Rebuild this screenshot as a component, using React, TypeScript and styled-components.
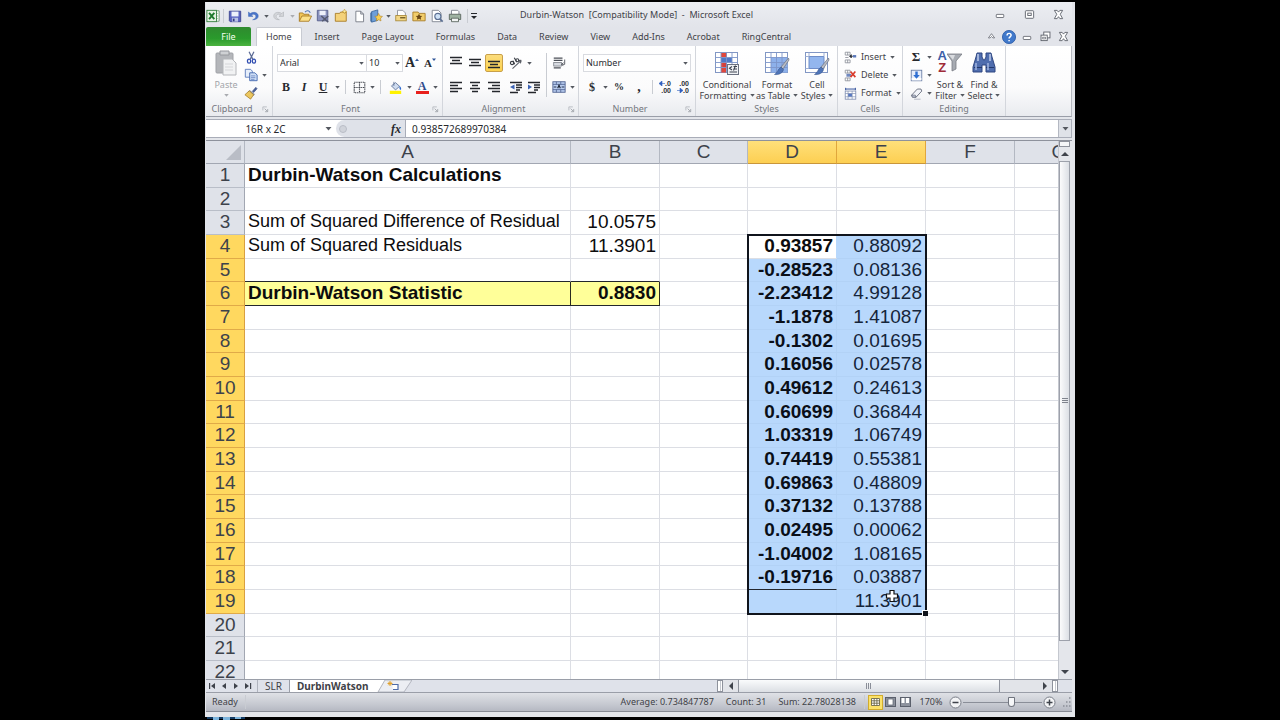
import React from "react";
import styled, { createGlobalStyle, css } from "styled-components";

const UI = `"Noto Sans", "Open Sans", sans-serif`;
const SHEET = `"Liberation Sans", Arial, sans-serif`;

const Global = createGlobalStyle`
  * { box-sizing: border-box; }
  html, body { margin: 0; background: #000; }
  body { font-family: ${UI}; font-size: 9px; line-height: 12px; color: #3f4247; }
  button, input, select { font: inherit; color: inherit; margin: 0; padding: 0; border: 0; background: none; }
  a { color: inherit; text-decoration: none; }
  svg { display: block; flex: none; }
`;

/* ---------- frame ---------- */

const Page = styled.div`
  display: flex;
  flex-direction: column;
  height: 100vh;
  padding: 2px 205px 0;
`;

const Window = styled.main`
  flex: 1;
  min-height: 0;
  display: flex;
  flex-direction: column;
  padding: 0 3px 5px 1px;
  background: #e3e5ea;
`;

const Taskbar = styled.div`
  height: 3px;
  background: #000;
`;

const TitleBar = styled.header`
  display: flex;
  align-items: center;
  height: 25px;
  background: linear-gradient(#eceef2, #e2e4ea);
`;

const QuickAccess = styled.div`
  flex: 1 1 0;
  display: flex;
  align-items: center;
  padding-top: 3px;
`;

const Title = styled.h1`
  margin: 0;
  font-size: 9px;
  font-weight: 400;
  line-height: 14px;
  white-space: pre;
  color: #3f4248;
`;

const Controls = styled.div<{ $gap: number; $end?: number }>`
  flex: 1 1 0;
  display: flex;
  align-items: center;
  justify-content: flex-end;
  gap: ${(p) => p.$gap}px;
  padding-right: ${(p) => p.$end ?? 0}px;
`;

const Slot = styled.button<{ $w?: number; $on?: boolean }>`
  display: flex;
  align-items: center;
  justify-content: center;
  width: ${(p) => p.$w ?? 18}px;
  height: 18px;
  flex: none;
  ${(p) =>
    p.$on &&
    css`
      background: linear-gradient(#fbdc7c, #fcd24f);
      border: 1px solid #c9a04a;
      border-radius: 2px;
    `}
`;

const Divider = styled.span<{ $w?: number; $h?: number }>`
  display: flex;
  justify-content: center;
  flex: none;
  width: ${(p) => p.$w ?? 7}px;
  &::before {
    content: "";
    width: 1px;
    height: ${(p) => p.$h ?? 14}px;
    background: #c9ccd2;
  }
`;

/* ---------- ribbon ---------- */

const TabRow = styled.nav`
  display: flex;
  align-items: stretch;
  height: 19px;
  background: #e2e4ea;
`;

const FileTab = styled.button`
  width: 45px;
  margin-right: 5px;
  background: linear-gradient(#2f8a2f, #2a9a2c 60%, #4bb33f);
  border-radius: 2px 2px 0 0;
  color: #f4fff0;
`;

const Tab = styled.a<{ $on?: boolean }>`
  display: flex;
  align-items: center;
  padding: 0 11px;
  white-space: nowrap;
  ${(p) => p.$on && css`
    padding: 0 9px;
    margin-right: 2px;
    background: #fff;
    border: 1px solid #c8cbd2;
    border-bottom: 0;
    border-radius: 2px 2px 0 0;
  `}
`;

const Ribbon = styled.section`
  display: flex;
  height: 71px;
  background: linear-gradient(#ffffff, #fbfbfc 60%, #e9ebef);
  border-bottom: 1px solid #9a9ea8;
  border-right: 1px solid #b5b8c0;
`;

const GroupBox = styled.div<{ $w: number }>`
  display: flex;
  flex-direction: column;
  flex: none;
  width: ${(p) => p.$w}px;
  border-right: 1px solid #d3d6dc;
`;

const GroupBody = styled.div<{ $pad?: number }>`
  display: flex;
  height: 56px;
  padding-left: ${(p) => p.$pad ?? 4}px;
`;

const GroupFoot = styled.div`
  display: flex;
  align-items: center;
  height: 14px;
  color: #74777e;
`;

const GroupName = styled.span`
  flex: 1;
  text-align: center;
`;

const Rows = styled.div<{ $top?: number; $w?: number }>`
  display: flex;
  flex-direction: column;
  flex: none;
  padding-top: ${(p) => p.$top ?? 5}px;
  ${(p) => p.$w && css`width: ${p.$w}px;`}
`;

const Row = styled.div<{ $h?: number; $gap?: number }>`
  display: flex;
  align-items: center;
  height: ${(p) => p.$h ?? 24}px;
`;

const Gap = styled.span`
  width: 4px;
  flex: none;
`;

const Field = styled.label<{ $w: number }>`
  display: flex;
  align-items: center;
  width: ${(p) => p.$w}px;
  height: 18px;
  padding: 0 2px;
  background: #fff;
  border: 1px solid #d9dbe0;
  & + & { border-left: 0; }
  select {
    flex: 1;
    min-width: 0;
    appearance: none;
    outline: 0;
    color: #2c2e33;
  }
`;

const BigButton = styled.button<{ $w: number; $dim?: boolean }>`
  display: flex;
  flex-direction: column;
  align-items: center;
  flex: none;
  width: ${(p) => p.$w}px;
  padding-top: 4px;
  line-height: 11px;
  white-space: nowrap;
  color: ${(p) => (p.$dim ? "#a3a5aa" : "inherit")};
  svg.big { margin-bottom: 3px; }
`;

const Line = styled.span`
  display: flex;
  align-items: center;
  gap: 3px;
  height: 11px;
`;

const TextButton = styled.button`
  display: flex;
  align-items: center;
  height: 18px;
  gap: 4px;
`;

const IconCell = styled.span`
  display: flex;
  justify-content: center;
  width: 14px;
`;

/* ---------- formula bar ---------- */

const FormulaBar = styled.div`
  display: flex;
  align-items: stretch;
  height: 19px;
  margin: 2px 0;
  background: #fff;
  border: 1px solid #a9adb8;
  border-left: 0;
  font-size: 10px;
`;

const NameBox = styled.div`
  display: flex;
  align-items: center;
  width: 130px;
  padding-right: 4px;
  input { flex: 1; min-width: 0; text-align: center; outline: 0; color: #26282c; }
`;

const FxArea = styled.div`
  display: flex;
  align-items: center;
  justify-content: space-between;
  width: 70px;
  padding: 0 4px 0 3px;
  background: #dfe2e9;
  border-right: 1px solid #a9adb8;
  border-radius: 9px 0 0 9px;
`;

const FormulaInput = styled.input`
  flex: 1;
  min-width: 0;
  padding-left: 6px !important;
  outline: 0;
  color: #26282c !important;
`;

const DropButton = styled.button`
  display: flex;
  align-items: center;
  justify-content: center;
  width: 13px;
  background: #dfe2e8;
  border-left: 1px solid #b4b8c2;
`;

/* ---------- worksheet ---------- */

const SheetArea = styled.section`
  flex: 1;
  min-height: 0;
  display: flex;
  border-top: 1px solid #8e929c;
`;

const SheetView = styled.div`
  flex: 1;
  min-width: 0;
  overflow: hidden;
  position: relative;
  background: #fff;
`;

const Table = styled.table`
  table-layout: fixed;
  width: 898px;
  border-collapse: separate;
  border-spacing: 0;
  font-family: ${SHEET};
  font-size: 19px;
  line-height: 21px;
  color: #0c0c0e;
  th, td { padding: 0; height: 24px; vertical-align: top; }
  tbody tr:nth-child(3n + 2) > * { height: 23px; }
`;

const ColHead = styled.th<{ $on?: boolean }>`
  && { height: 23px; }
  font-weight: 400;
  color: #3d424b;
  background: ${(p) => (p.$on ? "linear-gradient(#ffe07a, #fdcf52)" : "#dfe2e9")};
  border-right: 1px solid ${(p) => (p.$on ? "#e0a63c" : "#b3b8c2")};
  border-bottom: 1px solid ${(p) => (p.$on ? "#c9963a" : "#a2a7b2")};
`;

const RowHead = styled.th<{ $on?: boolean }>`
  font-weight: 400;
  color: #3d424b;
  background: ${(p) => (p.$on ? "#ffd85f" : "#dfe2e9")};
  border-right: 1px solid ${(p) => (p.$on ? "#d9a040" : "#a2a7b2")};
  border-bottom: 1px solid ${(p) => (p.$on ? "#e0aa48" : "#b9bec8")};
`;

type CellLook = { $num?: boolean; $bold?: boolean; $fill?: "sel" | "active" | "yellow"; $under?: boolean; $side?: boolean };

const Cell = styled.td<CellLook>`
  && { padding: 0 3px; }
  overflow: hidden;
  white-space: nowrap;
  font-size: ${(p) => (p.$num || p.$bold ? 19 : 18)}px;
  text-align: ${(p) => (p.$num ? "right" : "left")};
  font-weight: ${(p) => (p.$bold ? 700 : 400)};
  border-right: 1px solid #dcdee4;
  border-bottom: 1px solid #dcdee4;
  ${(p) => p.$fill === "sel" && css`background: #b8d8fc; border-color: #b2d2f6; color: #15253a;`}
  ${(p) => p.$fill === "sel" && p.$bold && css`color: #0a0f18;`}
  ${(p) => p.$fill === "active" && css`background: #fff; border-right-color: #b8d8fc;`}
  ${(p) => p.$fill === "yellow" && css`background: #ffff99;`}
  ${(p) => p.$side && css`border-right-color: #2a2a20;`}
  ${(p) => p.$under && css`border-bottom-color: #23262c;`}
`;

const Selection = styled.div`
  position: absolute;
  left: 541px;
  top: 93px;
  width: 180px;
  height: 381px;
  border: 2px solid #10141c;
  pointer-events: none;
  &::after {
    content: "";
    position: absolute;
    right: -3px;
    bottom: -3px;
    width: 5px;
    height: 5px;
    background: #10141c;
    border: solid #fff;
    border-width: 1px 0 0 1px;
  }
`;

const Pointer = styled.div`
  position: absolute;
  left: 679px;
  top: 448px;
`;

const VScroll = styled.div`
  display: flex;
  flex-direction: column;
  width: 14px;
  background: #e4e6eb;
  border-left: 1px solid #c5c8cf;
`;

const VThumb = styled.div`
  flex: 20;
  display: flex;
  align-items: center;
  justify-content: center;
  width: 11px;
  background: linear-gradient(90deg, #fbfbfc, #dcdfe5);
  border: 1px solid #9da1ab;
`;

const VRest = styled.div`
  flex: 1;
`;

const VArrow = styled.button`
  display: flex;
  align-items: center;
  justify-content: center;
  width: 12px;
  height: 14px;
`;

const SplitBox = styled.div`
  width: 11px;
  height: 6px;
  background: #f5f6f8;
  border: 1px solid #8e929c;
`;

/* ---------- sheet tabs & status ---------- */

const TabStrip = styled.div`
  display: flex;
  align-items: stretch;
  height: 14px;
  background: #dfe2ea;
  border-top: 1px solid #9a9ea8;
  border-bottom: 1px solid #9a9ea8;
`;

const SheetTabs = styled.div`
  flex: 1;
  display: flex;
  align-items: stretch;
  min-width: 0;
`;

const SheetNav = styled.div`
  display: flex;
  width: 51px;
`;

const NavButton = styled.button`
  display: flex;
  align-items: center;
  justify-content: center;
  width: 12px;
`;

const SheetTab = styled.button<{ $on?: boolean }>`
  padding: 0 7px;
  font-size: 10px;
  line-height: 12px;
  font-weight: ${(p) => (p.$on ? 700 : 400)};
  background: ${(p) => (p.$on ? "#fff" : "#dfe2ea")};
  border-left: ${(p) => (p.$on ? 0 : 1)}px solid #b0b4be;
  border-right: ${(p) => (p.$on ? 0 : 1)}px solid #9a9ea8;
  white-space: nowrap;
`;

const NewTab = styled.button`
  display: flex;
`;

const HScroll = styled.div`
  display: flex;
  align-items: stretch;
  flex: 0 0 341px;
  background: #e2e4e9;
`;

const HArrow = styled(NavButton)`
  width: 15px;
`;

const HThumb = styled.div`
  flex: 262;
  display: flex;
  align-items: center;
  justify-content: center;
  background: linear-gradient(#fafbfc, #dcdfe4);
  border: solid #8e929c;
  border-width: 0 1px;
`;

const HRest = styled.div`
  flex: 37;
`;

const HSplit = styled.div`
  width: 6px;
  display: flex;
  justify-content: center;
  background: #fff;
  border: 1px solid #8e929c;
  &::before { content: ""; width: 1px; background: #c5c8cf; }
`;

const Corner = styled.div`
  width: 14px;
`;

const StatusBar = styled.footer`
  display: flex;
  align-items: center;
  height: 19px;
  padding-left: 6px;
  background: linear-gradient(#dfe1e6, #c3c6ce 70%, #b5b8c2);
  border-bottom: 1px solid #868a94;
`;

const Ready = styled.span`
  width: 30px;
`;

const Stats = styled.div`
  flex: 1;
  display: flex;
  justify-content: flex-end;
  gap: 12px;
  padding-right: 5px;
  white-space: nowrap;
`;

const View = styled.button<{ $on?: boolean }>`
  display: flex;
  align-items: center;
  justify-content: center;
  width: 15px;
  height: 15px;
  ${(p) => p.$on && css`background: #fbe26a; border: 1px solid #d2ac2c;`}
`;

const Zoom = styled.button`
  width: 36px;
  text-align: center;
`;

const Range = styled.input`
  appearance: none;
  width: 79px;
  height: 12px;
  margin: 0 1px;
  background: linear-gradient(#8a8e98, #8a8e98) center / 100% 1px no-repeat;
  &::-webkit-slider-thumb {
    appearance: none;
    width: 7px;
    height: 10px;
    background: #f6f7f9;
    border: 1px solid #70747e;
    border-radius: 1px 1px 4px 4px;
  }
`;

/* ---------- icons ---------- */

const Caret = ({ w = 8, dim }: { w?: number; dim?: boolean }) => (
  <Slot $w={w} aria-label="More options">
    <Tri dim={dim} />
  </Slot>
);

const Tri = ({ dim, big }: { dim?: boolean; big?: boolean }) => (
  <svg width={big ? 7 : 5} height={big ? 4 : 3} viewBox="0 0 6 4">
    <path d="M0 0h6L3 3.6z" fill={dim ? "#a9abb0" : "#555960"} />
  </svg>
);

const art: Record<string, React.ReactNode> = {
  excel: (
    <>
      <path d="M7 2h8v12H7z" fill="#fff" stroke="#6d9a6f" />
      <path d="M9 5h5M9 8h5M9 11h5" stroke="#9cc29c" />
      <rect x="1" y="1.500" width="11" height="13" fill="#e6f3e4" stroke="#2f7d3a" />
      <path d="M3.500 4.500l6 7M9.500 4.500l-6 7" stroke="#1f7a2d" strokeWidth="2.200" />
    </>
  ),
  save: (
    <>
      <path d="M1.500 2.500h13v12h-12l-1-1z" fill="#5a63c0" stroke="#3c448f" />
      <rect x="4" y="3" width="8" height="5.500" fill="#eef1fb" />
      <rect x="4.500" y="10" width="7" height="4.500" fill="#b9c1e6" />
      <rect x="5.500" y="11" width="2" height="3" fill="#353c80" />
    </>
  ),
  undo: <path d="M2 2.500v6h6L5.800 6.500c3-2 6-.5 6 2 0 2-1.500 3.500-4.300 4.500 5 .2 7.500-2 7.500-5C15 3.500 9 1.500 4.200 4.800z" fill="#4a76c9" stroke="#3560b4" strokeWidth=".6" />,
  redo: <path d="M14 2.500v6H8l2.200-2c-3-2-6-.5-6 2 0 2 1.500 3.500 4.300 4.500C3.500 13.200 1 11 1 8c0-4.500 6-6.500 10.800-3.200z" fill="#d4d6da" stroke="#aeb1b7" strokeWidth=".8" />,
  open: (
    <>
      <path d="M1.500 14V4.500h4l1 1.500h6v3" fill="#f1c65a" stroke="#a77a24" />
      <path d="M1.500 14l3-6h11l-3 6z" fill="#fbe08a" stroke="#a77a24" />
      <path d="M8 3.500c2-2.500 5-2 6 1" fill="none" stroke="#4f74b8" strokeWidth="1.200" />
    </>
  ),
  savex: (
    <>
      <path d="M1.500 1.500h12v12h-12z" fill="#8a92bd" stroke="#555d8c" />
      <rect x="4" y="2" width="7" height="5" fill="#eef1fb" />
      <path d="M6 8l8 7M14 8l-7 6" stroke="#565b70" strokeWidth="1.800" />
    </>
  ),
  folder: (
    <>
      <path d="M1.500 14v-9h5l1-1.500h6.500V14z" fill="#f4d27a" stroke="#a77a24" />
      <path d="M12 0l.8 2 2 .7-2 .8-.8 2-.8-2-2-.8 2-.7z" fill="#ffef9c" stroke="#b88a25" strokeWidth=".5" />
    </>
  ),
  page: <path d="M3.500 1.500h6l3.500 3.500v9.500H3.500zM9.500 1.500V5H13" fill="#fff" stroke="#6a6f7b" />,
  book: (
    <>
      <path d="M3 3l7-2v12l-7 2z" fill="#6f9fd8" stroke="#3c689f" />
      <path d="M1.500 4.500L3 3v12l-1.500-1z" fill="#3c689f" />
      <path d="M11 5l1.400 3 3 .5-2.200 2 .5 3.200-2.700-1.500-2.700 1.500.5-3.200-2.200-2 3-.5z" fill="#fbcf4f" stroke="#a77a24" strokeWidth=".6" />
    </>
  ),
  mail: (
    <>
      <path d="M4 1.500h6l3 3V11H4z" fill="#fff" stroke="#8b8f99" />
      <rect x="2" y="7.500" width="12" height="6" fill="#f3d684" stroke="#a88a3c" />
      <path d="M7 10h6" stroke="#6d5a24" strokeWidth="1.500" />
    </>
  ),
  star: (
    <>
      <path d="M1 13.500v-10h6l1 1.500h7v8.500z" fill="#f1cd6c" stroke="#a77a24" />
      <path d="M8 5.500l1.200 2.300 2.500.3-1.800 1.700.5 2.500L8 11.100l-2.400 1.200.5-2.500-1.800-1.700 2.500-.3z" fill="#6a4714" />
    </>
  ),
  preview: (
    <>
      <path d="M2.500 1.500h7l3 3v10h-10z" fill="#fff" stroke="#7b808c" />
      <circle cx="9" cy="8.500" r="3.500" fill="#cfe2f6" stroke="#5b6f92" strokeWidth="1.300" />
      <path d="M11.500 11.500l3 3" stroke="#5b6f92" strokeWidth="2" />
    </>
  ),
  print: (
    <>
      <path d="M4 6V1.500h7l1.500 1.500V6" fill="#fff" stroke="#7b808c" />
      <path d="M1.500 6h13v6h-13z" fill="#9fb3a2" stroke="#58645c" />
      <path d="M4 10.500h8v4H4z" fill="#f2f4f3" stroke="#58645c" />
    </>
  ),
  cut: (
    <>
      <path d="M5 1l4.500 9M11 1L6.500 10" stroke="#5b6a94" strokeWidth="1.500" fill="none" />
      <ellipse cx="5" cy="12.500" rx="2" ry="2.400" fill="none" stroke="#2f4cb0" strokeWidth="1.600" />
      <ellipse cx="11" cy="12.500" rx="2" ry="2.400" fill="none" stroke="#2f4cb0" strokeWidth="1.600" />
    </>
  ),
  copy: (
    <>
      <path d="M1.500 1.500h6l2 2v7h-8z" fill="#e7effb" stroke="#5777b8" />
      <path d="M6.500 5.500h6l2.500 2.500v6.500H6.500z" fill="#cfdff6" stroke="#3d62ad" />
      <path d="M8 9h5M8 11h5M8 13h4" stroke="#5777b8" strokeWidth=".8" />
    </>
  ),
  brush: (
    <>
      <path d="M9.500 6l4-4.500 1.500 1.500-4 4.500z" fill="#49609a" stroke="#33477c" strokeWidth=".6" />
      <path d="M6.500 4.500l6 5-2 2-6-5z" fill="#8c93a4" />
      <path d="M1 10l5-4.500 5 4.500-3.500 5z" fill="#ecc75f" stroke="#9c7420" strokeWidth=".8" />
    </>
  ),
  borders: (
    <path d="M1.500 1.500h13v13h-13zM8 1.500v13M1.500 8h13" fill="none" stroke="#3b3f47" strokeDasharray="1.600 1" strokeWidth="1.400" />
  ),
  fill: (
    <>
      <path d="M3 6l5-4 5 4.500-5 4.500z" fill="#cfdcf0" stroke="#5a6d92" />
      <path d="M6 1v5" stroke="#5a6d92" />
      <path d="M13 6c2 1.500 2.500 3.500 1.500 5-1.500-.5-2-2.500-1.500-5z" fill="#2d6bd0" />
      <rect x="1" y="12" width="14" height="4" fill="#fff200" />
    </>
  ),
  orient: (
    <>
      <path d="M4 14.500L14 5M14 5l-3.500.3M14 5l-1 3.500" stroke="#5b5f67" strokeWidth="1.200" fill="none" />
      <circle cx="3.500" cy="8" r="1.900" fill="none" stroke="#3b3f46" strokeWidth="1.300" />
      <path d="M4.500 5.500l2 4M6 2l3 5" stroke="#3b3f46" strokeWidth="1.300" />
      <circle cx="9.500" cy="4.800" r="1.700" fill="none" stroke="#3b3f46" strokeWidth="1.200" />
    </>
  ),
  wrap: (
    <>
      <path d="M2 2.500h10M2 5h10M2 13.500h8" stroke="#4b4f57" strokeWidth="1.300" />
      <rect x="2" y="7.500" width="9" height="4" fill="#d8dbe1" stroke="#6b6f78" strokeWidth=".8" />
      <path d="M14.500 4v5.500h-3M13 7.500l-2 2 2 2" stroke="#4b4f57" fill="none" />
    </>
  ),
  merge: (
    <>
      <rect x="1" y="2" width="14" height="12" fill="#b9cdf0" stroke="#4c5f8e" />
      <path d="M1 5h14M1 11h14M5 2v3M10 2v3M5 11v3M10 11v3" stroke="#4c5f8e" strokeWidth=".9" />
      <path d="M2 8h3M14 8h-3" stroke="#26344f" strokeWidth="1.300" />
      <path d="M6.500 9.500L8 6l1.500 3.500" stroke="#1a2233" fill="none" strokeWidth="1.300" />
    </>
  ),
  insert: (
    <>
      <path d="M1.500 1.500h6v3.500h-6zM1.500 11h6v3.500h-6z" fill="#fff" stroke="#8a8e97" />
      <path d="M4.500 1.500V5M4.500 11v3.500M1.500 8h4" stroke="#8a8e97" />
      <path d="M7 6.500h4M7 6.500l2-2v4z" fill="#2c3038" stroke="#2c3038" />
      <rect x="11" y="5" width="4" height="3" fill="#5a78ba" />
    </>
  ),
  del: (
    <>
      <path d="M1.500 1.500h6v3.500h-6zM1.500 11h6v3.500h-6z" fill="#fff" stroke="#8a8e97" />
      <path d="M4.500 1.500V5M4.500 11v3.500" stroke="#8a8e97" />
      <rect x="3" y="6" width="6" height="3.500" fill="#7089c0" />
      <path d="M8 3l6 7M14 3L8 10" stroke="#d93a2b" strokeWidth="2" />
    </>
  ),
  format: (
    <>
      <path d="M2 1v3M14 1v3M2 2.500h12" stroke="#33529c" strokeWidth="1.200" />
      <rect x="1.500" y="5" width="13" height="10" fill="#fff" stroke="#7d8cb0" />
      <rect x="5" y="8" width="5" height="4" fill="#5577c4" />
      <path d="M1.500 8h13M1.500 12h13M5 5v10M10 5v10" stroke="#7d8cb0" strokeWidth=".8" />
    </>
  ),
  down: (
    <>
      <rect x="1.500" y="1.500" width="13" height="13" fill="#e8eefa" stroke="#60759f" />
      <path d="M2 11h12v3H2z" fill="#fff" />
      <path d="M6.500 3h3v4.500H12L8 12 4 7.500h2.500z" fill="#2f6fd2" />
    </>
  ),
  eraser: (
    <>
      <path d="M2 10l7-7.500h4.500l1 2.500-7 7.500H3z" fill="#f2f4f9" stroke="#575e70" />
      <path d="M2 10l1 2.500h4.500L6.500 10z" fill="#c3cadb" stroke="#575e70" strokeWidth=".8" />
      <path d="M5 15h8" stroke="#a6abb7" />
    </>
  ),
  help: (
    <>
      <circle cx="8" cy="8" r="7.500" fill="#4179cb" stroke="#2f5fa9" />
      <path d="M5.800 6.200c0-3.200 4.600-3 4.600-.2 0 1.800-2.300 1.900-2.300 3.700M8.100 11.300v1.600" fill="none" stroke="#fff" strokeWidth="1.700" />
    </>
  ),
  launch: (
    <>
      <path d="M2 10V2h9" fill="none" stroke="#a2a6ae" strokeWidth="1.500" />
      <path d="M6 6l6 6M13 7v6H7" fill="none" stroke="#8c9098" strokeWidth="1.600" />
    </>
  ),
  min: <rect x="2" y="7" width="12" height="5" rx="1" fill="#fff" stroke="#5b5f68" strokeWidth="1.300" />,
  max: (
    <>
      <rect x="2" y="2.500" width="12" height="11" rx="1" fill="#fff" stroke="#5b5f68" strokeWidth="1.300" />
      <rect x="5.500" y="6" width="5" height="3.500" fill="#fff" stroke="#5b5f68" strokeWidth="1.300" />
    </>
  ),
  close: (
    <path d="M2 2h4l2 2.500L10 2h4l-3.500 5.700L14 14h-4l-2-2.800L6 14H2l3.500-6.300z" fill="#fff" stroke="#5b5f68" strokeWidth="1.300" />
  ),
  restore: (
    <>
      <rect x="5.500" y="1.500" width="9" height="8.500" fill="#fff" stroke="#5b5f68" strokeWidth="1.300" />
      <rect x="1.500" y="6" width="9" height="8" fill="#fff" stroke="#5b5f68" strokeWidth="1.300" />
      <rect x="4" y="9" width="4" height="2.500" fill="none" stroke="#5b5f68" />
    </>
  ),
  collapse: <path d="M8 3l5.500 7.500h-3L8 8l-2.500 2.500h-3z" fill="#fff" stroke="#5b5f68" strokeWidth="1.300" />,
};

const Icon = ({ name, size = 14 }: { name: string; size?: number }) => (
  <svg width={size} height={size} viewBox="0 0 16 16">{art[name]}</svg>
);

const Lines = ({ xs, y = 2, step = 3 }: { xs: [number, number][]; y?: number; step?: number }) => (
  <svg width="14" height="14" viewBox="0 0 14 14">
    {xs.map(([a, b], i) => (
      <path key={i} d={`M${a} ${y + i * step + 0.5}H${b}`} stroke="#24272c" strokeWidth="1.500" />
    ))}
  </svg>
);

const Indent = ({ flip }: { flip?: boolean }) => (
  <svg width="14" height="14" viewBox="0 0 14 14">
    <path d="M1 2.500h12M7 5h6M7 7.500h6M7 10h4M1 12.500h8" stroke="#24272c" strokeWidth="1.300" />
    <path d={flip ? "M1 4.500L5 7 1 9.500z" : "M5.500 4.500L1 7l4.500 2.500z"} fill="#3c63b4" />
  </svg>
);

const Glyph = styled.span<{ $size: number; $u?: boolean; $i?: boolean }>`
  font-family: "Liberation Serif", serif;
  font-weight: 700;
  font-size: ${(p) => p.$size}px;
  line-height: 14px;
  font-style: ${(p) => (p.$i ? "italic" : "normal")};
  text-decoration: ${(p) => (p.$u ? "underline" : "none")};
  color: #26292e;
`;

const GrowFont = ({ up }: { up?: boolean }) => (
  <>
    <Glyph $size={up ? 14 : 11}>A</Glyph>
    <svg width="4" height="10" viewBox="0 0 4 10">
      <path d={up ? "M0 3l2-2.500L4 3z" : "M0 .5h4L2 3z"} fill="#2f5597" />
    </svg>
  </>
);

const FontColor = styled.span`
  display: block;
  width: 13px;
  text-align: center;
  font: 700 12px/10px "Liberation Serif", serif;
  color: #2e4a8c;
  border-bottom: 3px solid #e8201c;
`;

const Decimals = styled.span`
  font: 700 7px/8px ${SHEET};
  color: #2b2e34;
  display: flex;
  flex-direction: column;
  align-items: flex-end;
`;

const DecimalRow = styled.span`
  display: flex;
  align-items: center;
  height: 7px;
`;

const SmallArrow = ({ right }: { right?: boolean }) => (
  <svg width="6" height="5" viewBox="0 0 6 5">
    <path d={right ? "M0 2.500h3M6 2.500L3 0v5z" : "M6 2.500H3M0 2.500L3 0v5z"} fill="#2f5fc0" stroke="#2f5fc0" strokeWidth=".6" />
  </svg>
);

const PasteArt = () => (
  <svg className="big" width="24" height="26" viewBox="0 0 24 26">
    <rect x="2" y="3" width="17" height="20" rx="1" fill="#b4b6ba" stroke="#a0a2a7" />
    <path d="M6 1h9v4H6z" fill="#cfd1d4" stroke="#96989d" />
    <path d="M9 9h9l4 4v12H9z" fill="#f1f2f3" stroke="#b4b6ba" />
    <path d="M11 14h8M11 17h8M11 20h8" stroke="#d5d6d9" />
  </svg>
);

const GridArt = ({ kind }: { kind: "cond" | "table" | "cell" }) => (
  <svg className="big" width="26" height="26" viewBox="0 0 26 26">
    <rect x="1.500" y="2.500" width="22" height="20" fill="#fff" stroke="#8297c4" />
    {kind === "cond" && (
      <>
        <path d="M7 3h6v4.500H7zM7 12.500h6v5H7zM7 18h5v4.500H7z" fill="#e0483c" />
        <path d="M7 7.500h11v5H7z" fill="#4f78c6" />
        <path d="M9 12.500h4v5H9z" fill="#d2413b" />
      </>
    )}
    {kind === "table" && <path d="M7 7.500h16.500v15H7z" fill="#8db0ea" />}
    {kind !== "cell" && <path d="M7 2.500v20M12.500 2.500v20M18 2.500v20M1.500 7.500h22M1.500 12.500h22M1.500 17.500h22" stroke="#7d95c9" strokeWidth=".9" />}
    {kind === "cell" && (
      <>
        <path d="M5 6.500h15v12H5z" fill="#93b6ee" stroke="#6f8dc8" />
        <path d="M5 2.500v4M20 2.500v4M1.500 6.500H5M1.500 18.500H5" stroke="#9fb0d4" />
      </>
    )}
    {kind === "cond" ? (
      <>
        <rect x="13.500" y="14.500" width="11" height="10" fill="#f0f2f5" stroke="#6b7180" />
        <path d="M18 16.500l-2.500 1.800 2.500 1.700M19.500 16.500h3.500M19.500 19h3.500M15.500 22h7.500M21.500 15.500l-2 5" stroke="#3c4250" strokeWidth="1.100" fill="none" />
      </>
    ) : (
      <>
        <path d="M24.500 8L17 17l2 2 6-9z" fill="#b9bdc6" stroke="#6b7180" strokeWidth=".7" />
        <path d="M17 17l2.500 2.500c-1 4-5 5.500-9 5 3-1.500 3-5 6.500-7.500z" fill="#4e74b8" stroke="#3b578d" strokeWidth=".6" />
      </>
    )}
  </svg>
);

const SortLetters = styled.span`
  display: flex;
  flex-direction: column;
  font: 700 13px/12px ${SHEET};
  color: #3c5fa8;
  b { color: #a02c38; }
`;

const SortBox = styled.span`
  display: flex;
  width: 25px;
  height: 26px;
  margin-bottom: 3px;
`;

const SortArt = () => (
  <SortBox>
    <SortLetters>
      <span>A</span>
      <b>Z</b>
    </SortLetters>
    <svg width="15" height="22" viewBox="0 0 15 22">
      <path d="M0 4h15L9 11v8l-4 2V11z" fill="#a7abb2" stroke="#787c84" strokeWidth=".8" />
      <path d="M2 5h6L6 10z" fill="#dadce0" />
    </svg>
  </SortBox>
);

const Binoculars = () => (
  <svg className="big" width="26" height="26" viewBox="0 0 26 26">
    <path d="M6 3h5v4l1.500 3h1L15 7V3h5l1 4 3 10v5h-9v-7h-4v7H2v-5L5 7z" fill="#4f6dae" stroke="#2f4781" />
    <path d="M7 4v7M19 4v7" stroke="#b7c6e6" strokeWidth="1.600" />
    <path d="M3 17.500h8M15 17.500h8" stroke="#22386c" strokeWidth="1.200" />
    <path d="M5 13v7M17 13v7" stroke="#9cb0dc" strokeWidth="1.600" />
  </svg>
);

/* ---------- data ---------- */

const cols = ["A", "B", "C", "D", "E", "F", "G"];
const widths = [39, 326, 89, 88, 89, 89, 89, 89];

const left: Record<number, { a: string; b?: string; bold?: boolean; fill?: "yellow" }> = {
  1: { a: "Durbin-Watson Calculations", bold: true },
  3: { a: "Sum of Squared Difference of Residual", b: "10.0575" },
  4: { a: "Sum of Squared Residuals", b: "11.3901" },
  6: { a: "Durbin-Watson Statistic", b: "0.8830", bold: true, fill: "yellow" },
};

const residuals: [string, string][] = [
  ["0.93857", "0.88092"], ["-0.28523", "0.08136"], ["-2.23412", "4.99128"], ["-1.1878", "1.41087"],
  ["-0.1302", "0.01695"], ["0.16056", "0.02578"], ["0.49612", "0.24613"], ["0.60699", "0.36844"],
  ["1.03319", "1.06749"], ["0.74419", "0.55381"], ["0.69863", "0.48809"], ["0.37132", "0.13788"],
  ["0.02495", "0.00062"], ["-1.04002", "1.08165"], ["-0.19716", "0.03887"], ["", "11.3901"],
];

/* ---------- parts ---------- */

const Group = ({ name, w, pad, launcher = true, children }: { name: string; w: number; pad?: number; launcher?: boolean; children: React.ReactNode }) => (
  <GroupBox $w={w}>
    <GroupBody $pad={pad}>{children}</GroupBody>
    <GroupFoot>
      <GroupName>{name}</GroupName>
      {launcher && (
        <Slot $w={14} aria-label={`${name} options`}>
          <Icon name="launch" size={7} />
        </Slot>
      )}
    </GroupFoot>
  </GroupBox>
);

const Tool = ({ icon, w, size }: { icon: string; w?: number; size?: number }) => (
  <Slot $w={w} aria-label={icon}>
    <Icon name={icon} size={size} />
  </Slot>
);

const Big = ({ w, art: picture, lines }: { w: number; art: React.ReactNode; lines: [string, string] }) => (
  <BigButton $w={w}>
    {picture}
    <Line>{lines[0]}</Line>
    <Line>{lines[1]} <Tri /></Line>
  </BigButton>
);

const Grid = () => (
  <Table>
    <colgroup>
      {widths.map((w, i) => (
        <col key={i} width={w} />
      ))}
    </colgroup>
    <thead>
      <tr>
        <ColHead aria-label="Select all">
          <svg width="38" height="22" viewBox="0 0 38 22">
            <path d="M35 4v15H20z" fill="#b9bdc6" />
          </svg>
        </ColHead>
        {cols.map((c) => (
          <ColHead key={c} scope="col" $on={c === "D" || c === "E"}>{c}</ColHead>
        ))}
      </tr>
    </thead>
    <tbody>
      {Array.from({ length: 22 }, (_, i) => i + 1).map((n) => {
        const l = left[n];
        const r = residuals[n - 4];
        const boxed = n === 5 || n === 6;
        return (
          <tr key={n}>
            <RowHead scope="row" $on={!!r}>{n}</RowHead>
            <Cell $bold={l?.bold} $fill={l?.fill} $under={boxed} $side={n === 6}>{l?.a}</Cell>
            <Cell $num $bold={l?.bold} $fill={l?.fill} $under={boxed} $side={n === 6}>{l?.b}</Cell>
            <Cell />
            <Cell $num $bold $fill={r ? (n === 4 ? "active" : "sel") : undefined} $under={n === 18}>{r?.[0]}</Cell>
            <Cell $num $fill={r ? "sel" : undefined}>{r?.[1]}</Cell>
            <Cell />
            <Cell />
          </tr>
        );
      })}
    </tbody>
  </Table>
);

const Arrow = ({ d }: { d: string }) => (
  <svg width="8" height="8" viewBox="0 0 8 8">
    <path d={d} fill="#3f434b" />
  </svg>
);

export default function App() {
  return (
    <Page>
      <Global />
      <Window>
        <TitleBar>
          <QuickAccess>
            <Tool icon="excel" w={14} />
            <Divider $w={6} />
            <Tool icon="save" />
            <Tool icon="undo" size={12} />
            <Caret />
            <Tool icon="redo" size={12} />
            <Caret dim />
            <Tool icon="open" />
            <Tool icon="savex" />
            <Tool icon="folder" />
            <Tool icon="page" size={13} />
            <Tool icon="book" w={16} />
            <Caret />
            <Tool icon="mail" />
            <Tool icon="star" />
            <Tool icon="preview" />
            <Tool icon="print" />
            <Divider $w={6} />
            <Slot $w={8} aria-label="Customize toolbar">
              <svg width="6" height="7" viewBox="0 0 6 7">
                <path d="M0 .5h6" stroke="#24272c" />
                <path d="M0 3h6L3 6z" fill="#24272c" />
              </svg>
            </Slot>
          </QuickAccess>
          <Title>{"Durbin-Watson  [Compatibility Mode]  -  Microsoft Excel"}</Title>
          <Controls $gap={11} $end={5}>
            <Tool icon="min" size={10} />
            <Tool icon="max" size={11} />
            <Tool icon="close" size={11} />
          </Controls>
        </TitleBar>

        <TabRow>
          <FileTab>File</FileTab>
          <Tab href="#home" $on>Home</Tab>
          {["Insert", "Page Layout", "Formulas", "Data", "Review", "View", "Add-Ins", "Acrobat", "RingCentral"].map((t) => (
            <Tab key={t} href={`#${t}`}>{t}</Tab>
          ))}
          <Controls $gap={0}>
            <Tool icon="collapse" size={9} />
            <Tool icon="help" size={14} />
            <Tool icon="min" size={10} />
            <Tool icon="restore" size={11} />
            <Tool icon="close" size={11} />
          </Controls>
        </TabRow>

        <Ribbon>
          <Group name="Clipboard" w={67}>
            <BigButton $w={32} $dim>
              <PasteArt />
              <Line>Paste</Line>
              <Line><Tri dim /></Line>
            </BigButton>
            <Rows $top={2}>
              <Row $h={18}><Tool icon="cut" size={13} /></Row>
              <Row $h={18}><Tool icon="copy" size={14} /><Caret /></Row>
              <Row $h={18}><Tool icon="brush" size={14} /></Row>
            </Rows>
          </Group>

          <Group name="Font" w={170}>
            <Rows>
              <Row>
                <Field $w={90}>
                  <select aria-label="Font"><option>Arial</option></select>
                  <Tri />
                </Field>
                <Field $w={36}>
                  <select aria-label="Font size"><option>10</option></select>
                  <Tri />
                </Field>
                <Slot aria-label="Grow font"><GrowFont up /></Slot>
                <Slot aria-label="Shrink font"><GrowFont /></Slot>
              </Row>
              <Row>
                <Slot aria-label="Bold"><Glyph $size={12}>B</Glyph></Slot>
                <Slot aria-label="Italic"><Glyph $size={12} $i>I</Glyph></Slot>
                <Slot $w={20} aria-label="Underline"><Glyph $size={12} $u>U</Glyph></Slot>
                <Caret />
                <Divider $w={9} />
                <Tool icon="borders" size={13} />
                <Caret />
                <Divider $w={9} />
                <Tool icon="fill" w={20} size={13} />
                <Caret />
                <Slot aria-label="Font color"><FontColor>A</FontColor></Slot>
                <Caret />
              </Row>
            </Rows>
          </Group>

          <Group name="Alignment" w={136}>
            <Rows $w={96}>
              <Row>
                <Slot aria-label="Top align"><Lines xs={[[1, 13], [3, 11], [1, 13]]} y={1} /></Slot>
                <Slot $w={20} aria-label="Middle align"><Lines xs={[[1, 13], [3, 11], [1, 13]]} y={3} /></Slot>
                <Slot $on aria-label="Bottom align"><Lines xs={[[1, 13], [3, 11], [1, 13]]} y={5} /></Slot>
                <Gap />
                <Tool icon="orient" size={14} />
                <Caret />
              </Row>
              <Row>
                <Slot aria-label="Align left"><Lines xs={[[1, 13], [1, 9], [1, 13], [1, 9]]} /></Slot>
                <Slot $w={20} aria-label="Center"><Lines xs={[[2, 12], [4, 10], [2, 12], [4, 10]]} /></Slot>
                <Slot aria-label="Align right"><Lines xs={[[1, 13], [5, 13], [1, 13], [5, 13]]} /></Slot>
                <Gap />
                <Slot aria-label="Decrease indent"><Indent /></Slot>
                <Slot aria-label="Increase indent"><Indent flip /></Slot>
              </Row>
            </Rows>
            <Row $h={58}><Divider $h={44} /></Row>
            <Rows>
              <Row><Tool icon="wrap" /></Row>
              <Row><Tool icon="merge" /><Caret /></Row>
            </Rows>
          </Group>

          <Group name="Number" w={117}>
            <Rows>
              <Row>
                <Field $w={108}>
                  <select aria-label="Number format"><option>Number</option></select>
                  <Tri />
                </Field>
              </Row>
              <Row>
                <Slot aria-label="Currency"><Glyph $size={12}>$</Glyph></Slot>
                <Caret />
                <Slot $w={20} aria-label="Percent"><Glyph $size={10}>%</Glyph></Slot>
                <Slot $w={20} aria-label="Comma"><Glyph $size={14}>,</Glyph></Slot>
                <Divider />
                <Slot aria-label="Increase decimal">
                  <Decimals>
                    <DecimalRow><SmallArrow />.0</DecimalRow>
                    <DecimalRow>.00</DecimalRow>
                  </Decimals>
                </Slot>
                <Slot aria-label="Decrease decimal">
                  <Decimals>
                    <DecimalRow>.00</DecimalRow>
                    <DecimalRow><SmallArrow right />.0</DecimalRow>
                  </Decimals>
                </Slot>
              </Row>
            </Rows>
          </Group>

          <Group name="Styles" w={142} pad={3} launcher={false}>
            <Big w={56} art={<GridArt kind="cond" />} lines={["Conditional", "Formatting"]} />
            <Big w={44} art={<GridArt kind="table" />} lines={["Format", "as Table"]} />
            <Big w={36} art={<GridArt kind="cell" />} lines={["Cell", "Styles"]} />
          </Group>

          <Group name="Cells" w={65} pad={5} launcher={false}>
            <Rows $top={2}>
              <TextButton><IconCell><Icon name="insert" size={13} /></IconCell>Insert <Tri /></TextButton>
              <TextButton><IconCell><Icon name="del" size={13} /></IconCell>Delete <Tri /></TextButton>
              <TextButton><IconCell><Icon name="format" size={13} /></IconCell>Format <Tri /></TextButton>
            </Rows>
          </Group>

          <Group name="Editing" w={103} launcher={false}>
            <Rows $top={2}>
              <Row $h={18}><Slot aria-label="Sum"><Glyph $size={13}>Σ</Glyph></Slot><Caret /></Row>
              <Row $h={18}><Tool icon="down" size={13} /><Caret /></Row>
              <Row $h={18}><Tool icon="eraser" size={13} /><Caret /></Row>
            </Rows>
            <Big w={34} art={<SortArt />} lines={["Sort &", "Filter"]} />
            <Big w={34} art={<Binoculars />} lines={["Find &", "Select"]} />
          </Group>
        </Ribbon>

        <FormulaBar>
          <NameBox>
            <input aria-label="Name box" defaultValue="16R x 2C" />
            <Tri big />
          </NameBox>
          <FxArea>
            <svg width="8" height="8" viewBox="0 0 8 8"><circle cx="4" cy="4" r="3.500" fill="#d0d3da" stroke="#b9bdc6" /></svg>
            <Glyph $size={12} $i>fx</Glyph>
          </FxArea>
          <FormulaInput aria-label="Formula" defaultValue="0.938572689970384" />
          <DropButton aria-label="Expand formula bar"><Tri big /></DropButton>
        </FormulaBar>

        <SheetArea>
          <SheetView>
            <Grid />
            <Selection />
            <Pointer>
              <svg width="14" height="14" viewBox="0 0 14 14">
                <path d="M5 1.500h4V5h3.500v4H9v3.500H5V9H1.500V5H5z" fill="#fff" stroke="#111" strokeWidth="1.200" />
              </svg>
            </Pointer>
          </SheetView>
          <VScroll>
            <SplitBox />
            <VArrow aria-label="Scroll up"><Arrow d="M4 2l4 4H0z" /></VArrow>
            <VThumb>
              <svg width="6" height="6" viewBox="0 0 6 6"><path d="M0 .5h6M0 2.500h6M0 4.500h6" stroke="#7f838d" /></svg>
            </VThumb>
            <VRest />
            <VArrow aria-label="Scroll down"><Arrow d="M4 6l4-4H0z" /></VArrow>
          </VScroll>
        </SheetArea>

        <TabStrip>
          <SheetTabs>
            <SheetNav>
              <NavButton aria-label="First sheet"><Arrow d="M1 1h1.200v6H1zM7 1v6L3 4z" /></NavButton>
              <NavButton aria-label="Previous sheet"><Arrow d="M6 1v6L2 4z" /></NavButton>
              <NavButton aria-label="Next sheet"><Arrow d="M2 1v6l4-3z" /></NavButton>
              <NavButton aria-label="Last sheet"><Arrow d="M6 1h1.200v6H6zM1 1v6l4-3z" /></NavButton>
            </SheetNav>
            <SheetTab>SLR</SheetTab>
            <SheetTab $on>DurbinWatson</SheetTab>
            <NewTab aria-label="Insert worksheet">
              <svg width="36" height="12" viewBox="0 0 36 12">
                <path d="M0 0h9L2 12H0z" fill="#fff" />
                <path d="M9 0L2 12h26l8-12z" fill="#eceef3" stroke="#a6aab4" strokeWidth=".8" />
                <path d="M16 4.500h6v5h-5" fill="#fff" stroke="#4e6ca8" strokeWidth="1.200" />
                <path d="M14 1v5M11.500 3.500h5M12.300 1.800l3.400 3.400M15.700 1.800l-3.400 3.400" stroke="#e0a22e" />
              </svg>
            </NewTab>
          </SheetTabs>
          <HScroll>
            <HSplit />
            <HArrow aria-label="Scroll left"><Arrow d="M6 0v8L2 4z" /></HArrow>
            <HThumb>
              <svg width="6" height="6" viewBox="0 0 6 6"><path d="M.5 0v6M2.500 0v6M4.500 0v6" stroke="#8a8e98" /></svg>
            </HThumb>
            <HRest />
            <HArrow aria-label="Scroll right"><Arrow d="M2 0v8l4-4z" /></HArrow>
            <HSplit />
          </HScroll>
          <Corner />
        </TabStrip>

        <StatusBar>
          <Ready>Ready</Ready>
          <Divider />
          <Stats>
            <span>Average: 0.734847787</span>
            <span>Count: 31</span>
            <span>Sum: 22.78028138</span>
          </Stats>
          <Divider />
          <View $on aria-label="Normal view">
            <svg width="9" height="8" viewBox="0 0 9 8"><path d="M.5.500h8v7h-8zM3.200.500v7M5.900.500v7M.5 2.800h8M.5 5.200h8" fill="#fff" stroke="#6d6a4a" strokeWidth=".9" /></svg>
          </View>
          <View aria-label="Page layout view">
            <svg width="11" height="10" viewBox="0 0 11 10"><rect x=".5" y=".5" width="10" height="9" fill="#8d929d" stroke="#5b606c" /><rect x="3" y="2" width="5" height="6" fill="#fff" stroke="#5b606c" strokeWidth=".7" /></svg>
          </View>
          <View aria-label="Page break view">
            <svg width="11" height="10" viewBox="0 0 11 10"><rect x=".5" y=".5" width="10" height="9" fill="#8d929d" stroke="#5b606c" /><path d="M1.500 1h3v5h-3zM6 1h3v5H6z" fill="#fff" /></svg>
          </View>
          <Zoom>170%</Zoom>
          <Slot $w={13} aria-label="Zoom out">
            <svg width="13" height="13" viewBox="0 0 13 13"><circle cx="6.500" cy="6.500" r="5.500" fill="#f3f4f6" stroke="#7a7e88" /><path d="M3.500 6.500h6" stroke="#3f434b" strokeWidth="1.500" /></svg>
          </Slot>
          <Range type="range" aria-label="Zoom" min={0} max={100} defaultValue={62} />
          <Slot $w={13} aria-label="Zoom in">
            <svg width="13" height="13" viewBox="0 0 13 13"><circle cx="6.500" cy="6.500" r="5.500" fill="#f3f4f6" stroke="#7a7e88" /><path d="M3.500 6.500h6M6.500 3.500v6" stroke="#3f434b" strokeWidth="1.500" /></svg>
          </Slot>
          <svg width="16" height="14" viewBox="0 0 16 14">
            <path d="M13 3h1.500M10 7h1.500M13 7h1.500M7 11h1.500M10 11h1.500M13 11h1.500" stroke="#8a8e98" strokeWidth="1.500" />
          </svg>
        </StatusBar>
      </Window>
      <Taskbar>
        <svg width="42" height="3" viewBox="0 0 42 3">
          <path d="M2 0h38v2H2z" fill="#123a63" />
          <path d="M8 0h6v3H8zM18 0h7v3h-7zM30 0h6v2h-6z" fill="#7db4dc" />
        </svg>
      </Taskbar>
    </Page>
  );
}
